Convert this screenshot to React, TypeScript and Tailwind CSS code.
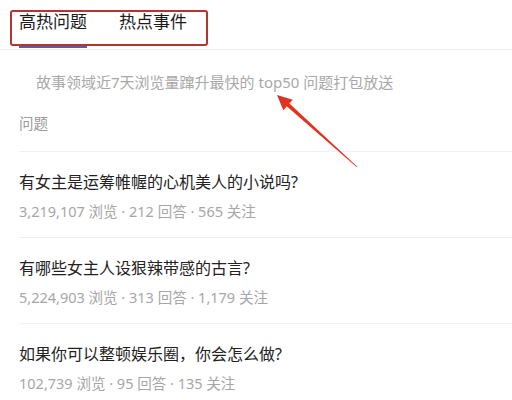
import React from 'react';

const questions = [
  { title: '有女主是运筹帷幄的心机美人的小说吗?', meta: '3,219,107 浏览 · 212 回答 · 565 关注' },
  { title: '有哪些女主人设狠辣带感的古言?', meta: '5,224,903 浏览 · 313 回答 · 1,179 关注' },
  { title: '如果你可以整顿娱乐圈，你会怎么做?', meta: '102,739 浏览 · 95 回答 · 135 关注' },
];

const font = { fontFamily: '"Noto Sans", "Noto Sans CJK SC", sans-serif' };

const App: React.FC = () => {
  return (
    <div className="relative w-[512px] h-[400px] overflow-hidden bg-white" style={font}>
      {/* tabs */}
      <div className="flex gap-[32px] px-[19px] h-[50px] border-b border-[#f0f0f0]">
        <div className="relative h-full">
          <div className="pt-[10px] text-[17px] leading-[24px] text-[#1a1a1a]">高热问题</div>
          <div className="absolute left-0 right-0 bottom-[1px] h-[3px] bg-[#5b5ea6]" />
        </div>
        <div className="h-full">
          <div className="pt-[10px] text-[17px] leading-[24px] text-[#1a1a1a]">热点事件</div>
        </div>
      </div>

      <div className="mt-[22px] pl-[36px] text-[15px] leading-[20px] text-[#a8a8a8]">
        故事领域近7天浏览量蹿升最快的 top50 问题打包放送
      </div>
      <div className="mt-[21px] pl-[19px] text-[14.5px] leading-[20px] text-[#999]">问题</div>

      <div className="mt-[18px]">
        {questions.map(q => (
          <div key={q.title} className="ml-[19px] border-t border-[#f0f0f0] pt-[18px] pb-[16px]">
            <div className="text-[16px] leading-[24px] text-[#222]">{q.title}</div>
            <div className="mt-[7px] text-[14.5px] leading-[20px] text-[#a6a6a6]">{q.meta}</div>
          </div>
        ))}
      </div>

      {/* annotation box */}
      <div className="absolute left-[10px] top-[10px] w-[198px] h-[36px] border-2 border-[#b83232] rounded-[3px]" />

      {/* annotation arrow */}
      <svg className="absolute left-0 top-0" width="512" height="400" viewBox="0 0 512 400">
        <polygon points="287.3,101.5 357.3,166.8 356.8,167.3 284.7,104.5" fill="#e0321f" />
        <polygon points="277,95 292.7,99.8 283.3,110.2" fill="#e0321f" />
      </svg>
    </div>
  );
};

export default App;
